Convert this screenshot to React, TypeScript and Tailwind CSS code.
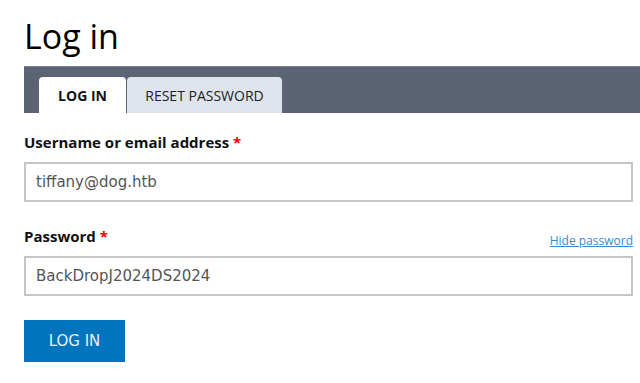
import React from "react";

export default function App() {
  return (
    <div className="w-[640px] h-[383px] overflow-hidden bg-white pl-6">
      <h1 className="pt-[14px] h-[66px] text-[34px] leading-[44px] text-black font-['Open_Sans',sans-serif] font-normal">
        Log in
      </h1>
      <div className="h-[47px] bg-[#5b6374] border-t border-[#7c818d] flex items-end pl-[15px] gap-px font-['Open_Sans',sans-serif]">
        <div className="h-[36px] w-[87px] bg-white rounded-t-[4px] flex items-center justify-center text-[14px] font-bold text-[#111]">
          LOG IN
        </div>
        <div className="h-[36px] w-[155px] bg-[#dfe3ec] rounded-t-[4px] flex items-center justify-center text-[14px] text-[#222]">
          RESET PASSWORD
        </div>
      </div>
      <div className="pr-[7px] font-['DejaVu_Sans',sans-serif]">
        <div className="pt-[19px] text-[15px] font-bold text-[#111] leading-[20px] font-['Open_Sans',sans-serif]">
          Username or email address <span className="text-[#e00]">*</span>
        </div>
        <div className="mt-[10px] h-[40px] border-2 border-[#c6c6c6] flex items-center px-[10px] text-[15px] text-[#555]">
          tiffany@dog.htb
        </div>
        <div className="mt-[24px] flex items-end justify-between">
          <div className="text-[15px] font-bold text-[#111] leading-[20px] font-['Open_Sans',sans-serif]">
            Password <span className="text-[#e00]">*</span>
          </div>
          <a className="text-[12px] text-[#3a8ad0] underline font-['Open_Sans',sans-serif] leading-[14px] mb-[-2px]">
            Hide password
          </a>
        </div>
        <div className="mt-[10px] h-[40px] border-2 border-[#c6c6c6] flex items-center px-[10px] text-[15px] text-[#555]">
          BackDropJ2024DS2024
        </div>
        <button className="mt-[24px] h-[42px] w-[101px] bg-[#0074bd] text-[#e8f1f8] text-[15px] flex items-center justify-center">
          LOG IN
        </button>
      </div>
    </div>
  );
}
